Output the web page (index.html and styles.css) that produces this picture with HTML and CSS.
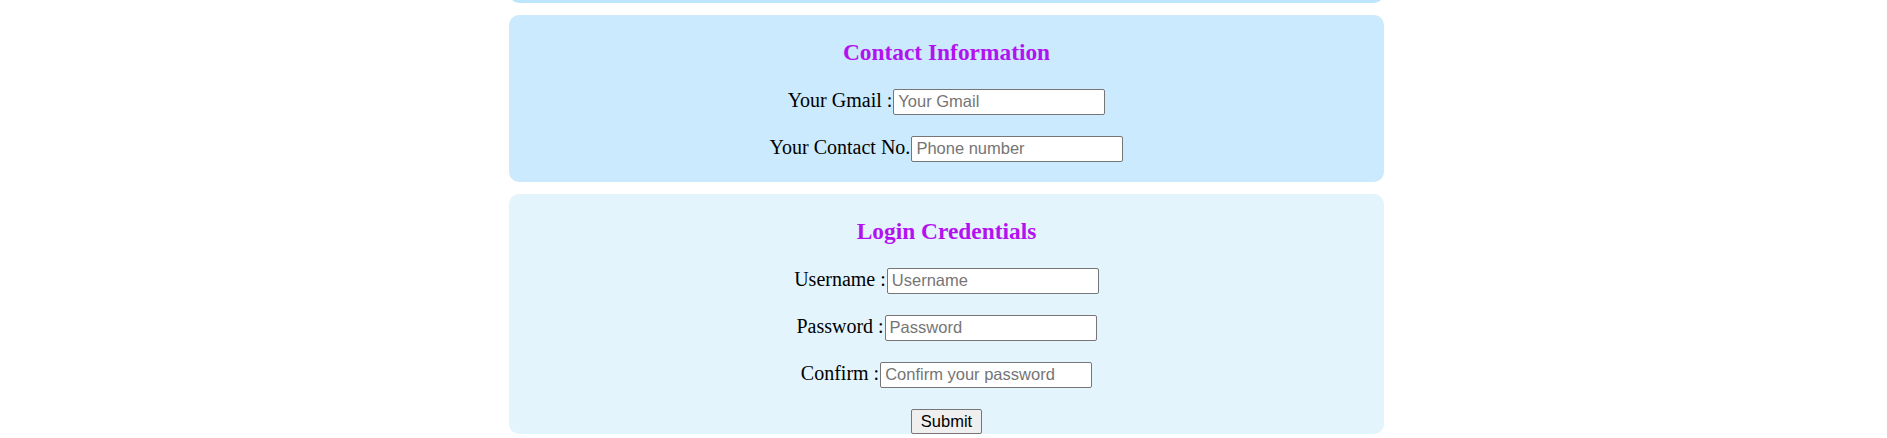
FILE: index.html
```html
<!DOCTYPE html>
<html lang="en">
<head>
<meta charset="utf-8">
<title>Registration</title>
<link rel="stylesheet" href="styles.css">
</head>
<body>
<main class="page">
  <div class="card card-prev"></div>

  <section class="card card-contact">
    <h2 class="card-title">Contact Information</h2>
    <div class="row">
      <label class="row-label" for="gmail">Your Gmail :</label>
      <input class="field" id="gmail" type="email" placeholder="Your Gmail">
    </div>
    <div class="row">
      <label class="row-label" for="phone">Your Contact No.</label>
      <input class="field" id="phone" type="tel" placeholder="Phone number">
    </div>
  </section>

  <section class="card card-login">
    <h2 class="card-title">Login Credentials</h2>
    <div class="row">
      <label class="row-label" for="user">Username :</label>
      <input class="field" id="user" type="text" placeholder="Username">
    </div>
    <div class="row">
      <label class="row-label" for="pass">Password :</label>
      <input class="field" id="pass" type="password" placeholder="Password">
    </div>
    <div class="row">
      <label class="row-label" for="confirm">Confirm :</label>
      <input class="field" id="confirm" type="password" placeholder="Confirm your password">
    </div>
    <div class="row">
      <button class="submit" type="submit">Submit</button>
    </div>
  </section>
</main>
</body>
</html>
```

FILE: styles.css
```css
* {
  box-sizing: border-box;
}

html, body {
  margin: 0;
  background: #ffffff;
}

body {
  padding-left: 6px;
  font-family: "Liberation Serif", "Times New Roman", serif;
  color: #000000;
}

.page {
  width: 875px;
  margin: 0 auto;
  display: flex;
  flex-direction: column;
  gap: 12px;
}

.card {
  border-radius: 10px;
  display: flex;
  flex-direction: column;
  align-items: center;
}

.card-prev {
  height: 40px;
  margin-top: -37px;
  background: #bde5fc;
}

.card-contact {
  background: #cbeafd;
  padding: 24px 0 20px;
  gap: 21px;
}

.card-login {
  background: #e3f4fd;
  padding: 24px 0 0;
  gap: 21px;
}

.card-title {
  margin: 0 0 3px;
  font-size: 23.4px;
  line-height: 26px;
  font-weight: bold;
  color: #b312f0;
}

.row {
  display: flex;
  justify-content: center;
  align-items: baseline;
}

.row-label {
  font-size: 20px;
  margin-right: 1px;
}

.field {
  width: 212px;
  height: 26px;
  padding: 0 4px 1px;
  border: 1px solid #767676;
  border-radius: 2px;
  background: #ffffff;
  font-family: "Liberation Sans", Arial, sans-serif;
  font-size: 16.5px;
  color: #000000;
}

.field::placeholder {
  color: #757575;
}

.submit {
  width: 71px;
  height: 25px;
  padding: 0;
  border: 1px solid #767676;
  border-radius: 2px;
  background: #efefef;
  font-family: "Liberation Sans", Arial, sans-serif;
  font-size: 16.5px;
  color: #000000;
}
```
